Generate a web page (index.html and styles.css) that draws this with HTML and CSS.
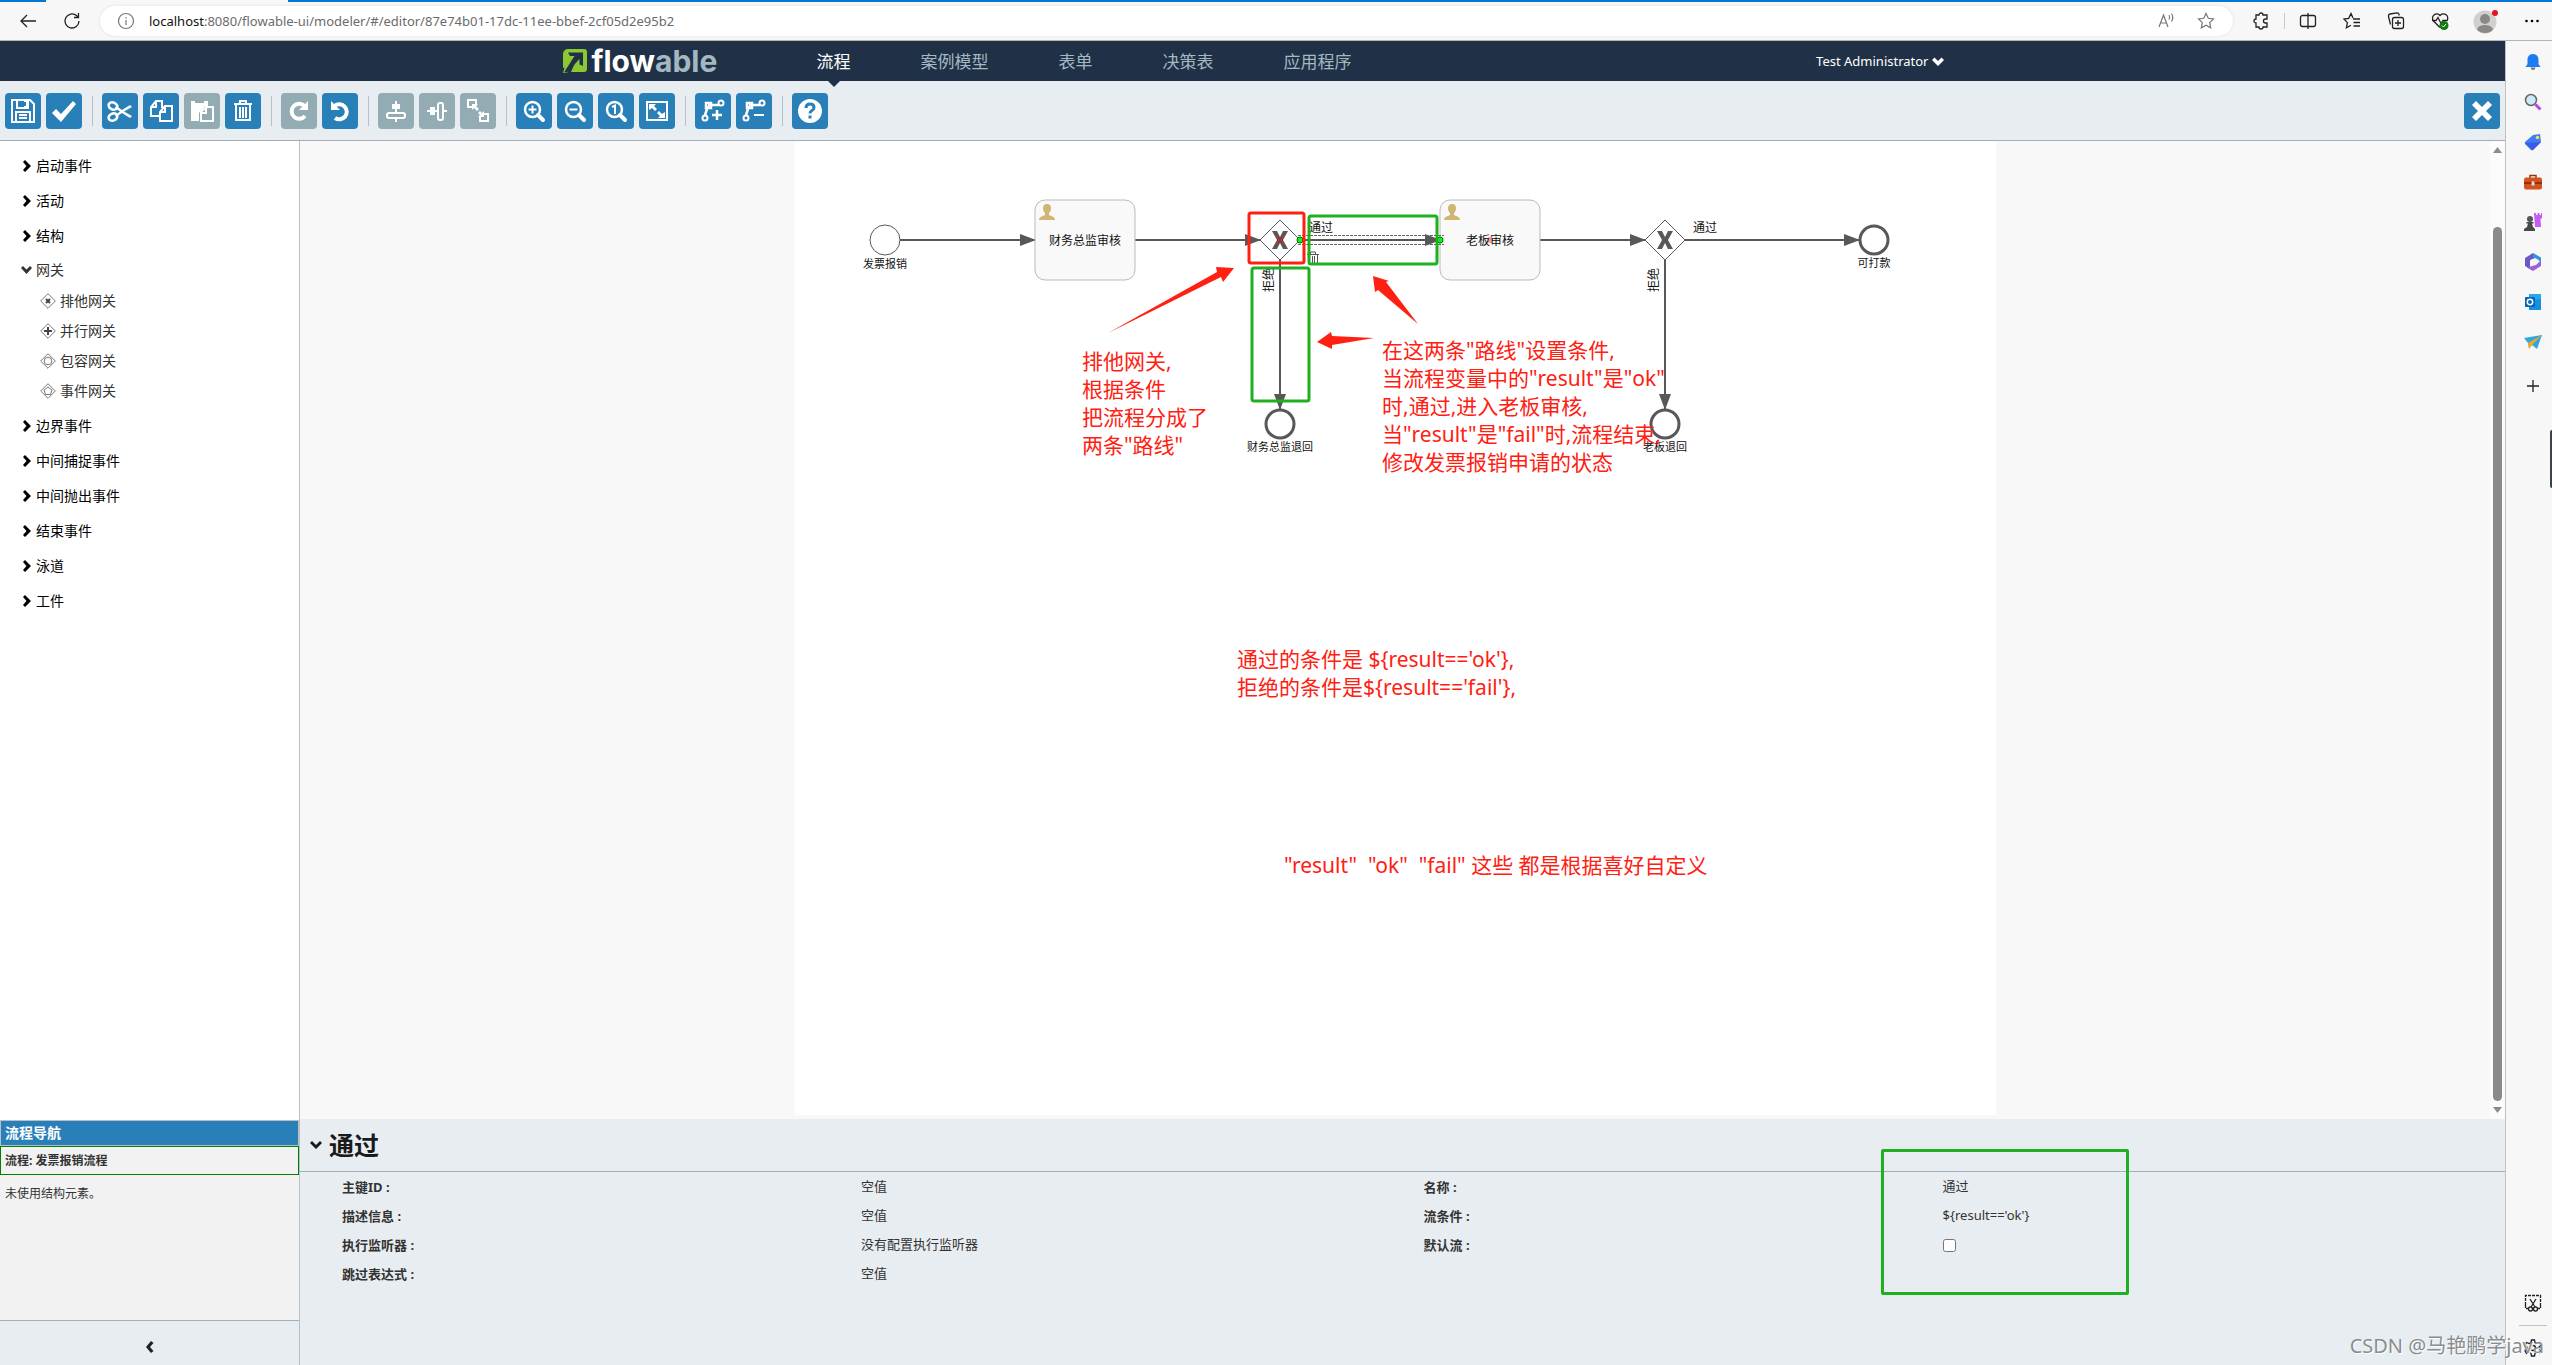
FILE: index.html
```html
<!DOCTYPE html>
<html lang="zh-CN">
<head>
<meta charset="utf-8">
<title>Flowable Modeler</title>
<meta name="viewport" content="width=device-width, initial-scale=1">
<link rel="stylesheet" href="styles.css">
</head>
<body>
<div class="browser-bar">
  <button class="icon-btn nav-btn" aria-label="后退"><svg width="18" height="16" viewBox="0 0 18 16"><path d="M17 8H2M8 2L2 8l6 6" class="ln-dark"/></svg></button>
  <button class="icon-btn nav-btn" aria-label="刷新"><svg width="18" height="18" viewBox="0 0 18 18"><path d="M16 9a7 7 0 1 1-2.500-5.400L15.500 5.500M15.500 1v4.500H11" class="ln-dark"/></svg></button>
  <div class="address">
    <svg width="18" height="18" viewBox="0 0 18 18"><circle cx="9" cy="9" r="7.500" class="ln-gray"/><path d="M9 8v5M9 5v1.500" class="ln-gray"/></svg>
    <span class="url"><b>localhost</b>:8080/flowable-ui/modeler/#/editor/87e74b01-17dc-11ee-bbef-2cf05d2e95b2</span>
    <button class="icon-btn addr-btn" aria-label="朗读"><svg width="18" height="18" viewBox="0 0 18 18"><path d="M2 15L6.500 3 11 15M3.500 11h6M12 3q1.500 2 0 4.500M14.500 1.500q2.500 4 0 8" class="ln-gray"/></svg></button>
    <button class="icon-btn addr-btn" aria-label="收藏"><svg width="18" height="18" viewBox="0 0 18 18"><path d="M9 1.500l2.300 4.800 5.200.7-3.800 3.600 1 5.200L9 13.300l-4.700 2.500 1-5.200L1.500 7l5.200-.7z" class="ln-gray"/></svg></button>
  </div>
  <div class="browser-tools">
    <button class="icon-btn" aria-label="扩展"><svg width="18" height="18" viewBox="0 0 18 18"><path d="M4 3h3a2 2 0 0 1 4 0h4v4h-1.500a2 2 0 0 0 0 4H15v4h-4a2 2 0 0 1-4 0H4v-4a2 2 0 0 1 0-4z" class="ln-dark"/></svg></button>
    <i class="tool-sep"></i>
    <button class="icon-btn" aria-label="分屏"><svg width="18" height="18" viewBox="0 0 18 18"><path d="M9 3.500H3.500a2 2 0 0 0-2 2v7a2 2 0 0 0 2 2H9M9 3.500h5.500a2 2 0 0 1 2 2v7a2 2 0 0 1-2 2H9M9 1v16" class="ln-dark"/></svg></button>
    <button class="icon-btn" aria-label="收藏夹"><svg width="18" height="18" viewBox="0 0 18 18"><path d="M10 6L8 1.500 5.700 6.300.8 7l3.600 3.600-1 5.200L8 13.300M10 7h7M10.500 10.500H17M10.500 14H17" class="ln-dark"/></svg></button>
    <button class="icon-btn" aria-label="集锦"><svg width="18" height="18" viewBox="0 0 18 18"><rect x="5.500" y="5.500" width="11" height="11" rx="2" class="ln-dark"/><path d="M11 8v6M8 11h6M3.500 12.500L1.500 4.500a2 2 0 0 1 1.500-2.500l7-1.200a2 2 0 0 1 2 1.500l.3 1.200" class="ln-dark"/></svg></button>
    <button class="icon-btn" aria-label="浏览器概要"><svg width="18" height="18" viewBox="0 0 18 18"><path d="M9 15.500L2.500 9a4.200 4.200 0 0 1 6.500-5.500A4.200 4.200 0 0 1 15.800 9M1 8.500h4L7 5.500l3 6 2-3h4.500" class="ln-dark"/><circle cx="13" cy="13.500" r="4.500" fill="#107c10"/><path d="M11 13.500l1.500 1.500 2.500-3" stroke="#fff" fill="none"/></svg></button>
    <button class="icon-btn avatar-btn" aria-label="个人资料"><svg width="28" height="26" viewBox="0 0 28 26"><clipPath id="av"><circle cx="13" cy="14" r="11"/></clipPath><circle cx="13" cy="14" r="11.500" fill="#d2d0ce"/><g clip-path="url(#av)" fill="#8a8886"><circle cx="13" cy="11" r="5"/><ellipse cx="13" cy="22" rx="8" ry="5"/></g><circle cx="23" cy="5" r="3" fill="#e81123"/></svg></button>
    <button class="icon-btn" aria-label="更多"><svg width="18" height="18" viewBox="0 0 18 18"><circle cx="3.500" cy="9" r="1.300"/><circle cx="9" cy="9" r="1.300"/><circle cx="14.500" cy="9" r="1.300"/></svg></button>
  </div>
</div>

<div class="window">
<div class="app">
  <header class="top">
    <div class="top-inner">
      <a class="logo" href="#"><svg width="26" height="26" viewBox="0 0 26 26"><path d="M6 1h16a3 3 0 0 1 3 3v17a3 3 0 0 1-3 3H9l3.500-8L1 20V6a5 5 0 0 1 5-5z" fill="#8bc832"/><path d="M1 25L3 18l7-3-5 10z" fill="#8bc832"/><path d="M6 4.500h15V18l-3.500-1.500V11L5 24.500H2L12.500 8H8z" fill="#203147"/></svg><span>flow<em>able</em></span></a>
      <nav class="main-nav"><a href="#" class="on">流程</a><a href="#">案例模型</a><a href="#">表单</a><a href="#">决策表</a><a href="#">应用程序</a></nav>
      <button class="user">Test Administrator <svg width="12" height="9" viewBox="0 0 12 9"><path d="M0 3l2.500-2.500L6 4 9.500.5 12 3 6 9z" fill="#fff"/></svg></button>
    </div>
  </header>

  <div class="toolbar">
    <button class="tb" aria-label="保存"><svg viewBox="0 0 26 26"><path d="M2 2h18l4 4v18H2zM7 2v8h11V2M14 3h3v6h-3M6 24V14h14v10M9 17h8M9 20h8" class="w2"/></svg></button>
    <button class="tb" aria-label="验证"><svg viewBox="0 0 26 26"><path d="M1 15l4-4 5 5L22 3l3 3-15 18z" class="wf"/></svg></button>
    <i class="sep"></i>
    <button class="tb" aria-label="剪切"><svg viewBox="0 0 26 26"><g class="w3"><ellipse cx="6" cy="8" rx="4.500" ry="3.500" transform="rotate(25 6 8)"/><ellipse cx="6" cy="19" rx="4.500" ry="3.500" transform="rotate(-25 6 19)"/></g><path d="M9 8l6 4 8-5 2 2-8 4.500L25 18l-2 2-8-5-6 4-1-2 5-3.500L8 10z" class="wf"/></svg></button>
    <button class="tb" aria-label="复制"><svg viewBox="0 0 26 26"><path d="M12 18H3V9l5-6h6v7M8 3v6H3M17 8h7v15H12V14zM17 8v6h-5" class="w2"/></svg></button>
    <button class="tb off" disabled aria-label="粘贴"><svg viewBox="0 0 26 26"><path d="M2 3h17v5h-3l-6 7v8H2z" class="wf"/><path d="M6 4h9" stroke="#93acb3" stroke-width="2"/><path d="M17 9h7v14H12v-9zM17 9v6h-5" class="w2"/></svg></button>
    <button class="tb" aria-label="删除"><svg viewBox="0 0 26 26"><path d="M4 6h18M10 6V3h6v3M6 7v15h14V7M10 9v11M13 9v11M16 9v11" class="w2"/></svg></button>
    <i class="sep"></i>
    <button class="tb off" disabled aria-label="重做"><svg viewBox="0 0 26 26"><path d="M19 18a7.500 7.500 0 1 1-.5-10" class="w4"/><path d="M22 3v9h-9z" class="wf"/></svg></button>
    <button class="tb" aria-label="撤销"><svg viewBox="0 0 26 26"><path d="M8 20a7.500 7.500 0 1 0-.5-12" class="w4"/><path d="M4 3v9h9z" class="wf"/></svg></button>
    <i class="sep"></i>
    <button class="tb off" disabled aria-label="垂直对齐"><svg viewBox="0 0 26 26"><path d="M9 6h8v5H9zM12 3h2v21h-2z" class="wf"/><rect x="4" y="15" width="18" height="5" rx="2" class="w2 hole"/></svg></button>
    <button class="tb off" disabled aria-label="水平对齐"><svg viewBox="0 0 26 26"><path d="M6 9h5v8H6zM3 12h20v2H3z" class="wf"/><rect x="14" y="5" width="5" height="17" rx="2" class="w2 hole"/></svg></button>
    <button class="tb off" disabled aria-label="相同大小"><svg viewBox="0 0 26 26"><path d="M8 9H3V2h8v6M18 16h5v7h-8v-5" class="w2"/><path d="M7 6h6l-2 2 3 3-2 2-3-3-2 2zM19 19h-6l2-2-2-2 2-2 2 2 2-2z" class="wf"/></svg></button>
    <i class="sep"></i>
    <button class="tb" aria-label="放大"><svg viewBox="0 0 26 26"><circle cx="11.500" cy="11.500" r="7.500" class="w3"/><path d="M17 17l5 5" class="w4 rnd"/><path d="M11.500 7.500v8M7.500 11.500h8" class="w2"/></svg></button>
    <button class="tb" aria-label="缩小"><svg viewBox="0 0 26 26"><circle cx="11.500" cy="11.500" r="7.500" class="w3"/><path d="M17 17l5 5" class="w4 rnd"/><path d="M7.500 11.500h8" class="w2"/></svg></button>
    <button class="tb" aria-label="实际大小"><svg viewBox="0 0 26 26"><circle cx="11.500" cy="11.500" r="7.500" class="w3"/><path d="M17 17l5 5" class="w4 rnd"/><path d="M9 9l3-1.500V16" class="w2"/></svg></button>
    <button class="tb" aria-label="适合屏幕"><svg viewBox="0 0 26 26"><rect x="3" y="4" width="20" height="18" class="w2"/><path d="M5 6h7l-2 2 3 3-2 2-3-3-3 2zM21 20h-7l2-2-3-3 2-2 3 3 3-2z" class="wf"/></svg></button>
    <i class="sep"></i>
    <button class="tb" aria-label="添加弯曲点"><svg viewBox="0 0 26 26"><circle cx="21" cy="5" r="2.500" class="w2"/><circle cx="5" cy="20" r="2.500" class="w2"/><path d="M6 5h5v5H6zM8 7h11M8 8L5 17" class="w3"/><path d="M17 12v10M12 17h10" class="w3"/></svg></button>
    <button class="tb" aria-label="删除弯曲点"><svg viewBox="0 0 26 26"><circle cx="21" cy="5" r="2.500" class="w2"/><circle cx="5" cy="20" r="2.500" class="w2"/><path d="M6 5h5v5H6zM8 7h11M8 8L5 17" class="w3"/><path d="M13 17h10" class="w2"/></svg></button>
    <i class="sep"></i>
    <button class="tb" aria-label="帮助"><svg viewBox="0 0 26 26"><circle cx="13" cy="13" r="12" class="wf"/><path d="M9 10q0-4 4-4t4 3.500q0 2-2 3t-2 3" fill="none" stroke="#2980b9" stroke-width="3"/><path d="M11.500 17.500h3v3h-3z" fill="#2980b9"/></svg></button>
    <button class="tb close" aria-label="关闭"><svg viewBox="0 0 26 26"><path d="M3 7l4-4 6 6 6-6 4 4-6 6 6 6-4 4-6-6-6 6-4-4 6-6z" class="wf"/></svg></button>
  </div>

  <div class="workspace">
    <aside class="left">
      <ul class="palette">
        <li><a href="#"><svg class="chev"><use href="#c-right"/></svg>启动事件</a></li>
        <li><a href="#"><svg class="chev"><use href="#c-right"/></svg>活动</a></li>
        <li><a href="#"><svg class="chev"><use href="#c-right"/></svg>结构</a></li>
        <li class="open"><a href="#"><svg class="chev"><use href="#c-down"/></svg>网关</a>
          <ul>
            <li><svg class="gw" viewBox="0 0 16 16"><path d="M8 .7L15.300 8 8 15.300.7 8z"/><path d="M6 6l4 4M10 6l-4 4" class="bold"/></svg>排他网关</li>
            <li><svg class="gw" viewBox="0 0 16 16"><path d="M8 .7L15.300 8 8 15.300.7 8z"/><path d="M8 4v8M4 8h8" class="bold"/></svg>并行网关</li>
            <li><svg class="gw" viewBox="0 0 16 16"><path d="M8 .7L15.300 8 8 15.300.7 8z"/><circle cx="8" cy="8" r="3.800"/></svg>包容网关</li>
            <li><svg class="gw" viewBox="0 0 16 16"><path d="M8 .7L15.300 8 8 15.300.7 8z"/><path d="M8 4l4 3-1.500 4.500h-5L4 7z"/></svg>事件网关</li>
          </ul>
        </li>
        <li><a href="#"><svg class="chev"><use href="#c-right"/></svg>边界事件</a></li>
        <li><a href="#"><svg class="chev"><use href="#c-right"/></svg>中间捕捉事件</a></li>
        <li><a href="#"><svg class="chev"><use href="#c-right"/></svg>中间抛出事件</a></li>
        <li><a href="#"><svg class="chev"><use href="#c-right"/></svg>结束事件</a></li>
        <li><a href="#"><svg class="chev"><use href="#c-right"/></svg>泳道</a></li>
        <li><a href="#"><svg class="chev"><use href="#c-right"/></svg>工件</a></li>
      </ul>
      <section class="navigator">
        <h2>流程导航</h2>
        <p class="current">流程: 发票报销流程</p>
        <p class="empty">未使用结构元素。</p>
      </section>
      <button class="collapse" aria-label="收起"><svg width="9" height="14" viewBox="0 0 9 14"><path d="M6 1l2.500 2L5 7l3.500 4L6 13 1 7z" fill="#222"/></svg></button>
    </aside>

    <main class="editor">
      <div class="canvas">
        <div class="canvas-body">
        <svg class="paper" viewBox="795 141 1201 974" width="1201" height="974">
          <defs>
            <marker id="head" markerUnits="userSpaceOnUse" markerWidth="16" markerHeight="12" refX="16" refY="6" orient="auto"><path d="M0 0l16 6-16 6z" fill="#585858"/></marker>
            <path id="person" d="M8 0c3 0 4 2 4 4.500 0 2-1 3.500-2 4.500v2c1 1 6 1 6 5H0c0-4 5-4 6-5V9c-1-1-2-2.500-2-4.500C4 2 5 0 8 0z" fill="#d1b575"/>
            <g id="gate"><path d="M0-20L20 0 0 20-20 0z" fill="#fff" stroke="#585858"/><path d="M-8-9h5l3 6 3-6h5L3 0l5 9H3L0 3l-3 6h-5l5-9z" fill="#585858"/></g>
          </defs>
          <g class="flow">
            <path d="M900 240H1036" marker-end="url(#head)"/><path d="M1135 240H1261" marker-end="url(#head)"/><path d="M1301 240H1441" marker-end="url(#head)"/><path d="M1540 240H1646" marker-end="url(#head)"/><path d="M1685 240H1860" marker-end="url(#head)"/>
            <path d="M1280 260V410" marker-end="url(#head)"/><path d="M1665 260V410" marker-end="url(#head)"/>
          </g>
          <circle cx="885" cy="240" r="15" fill="#fff" stroke="#585858"/>
          <g fill="#f9f9f9" stroke="#bbb"><rect x="1035" y="200" width="100" height="80" rx="10"/><rect x="1440" y="200" width="100" height="80" rx="10"/></g>
          <use href="#person" x="1039" y="204"/><use href="#person" x="1444" y="204"/>
          <use href="#gate" x="1280" y="240"/><use href="#gate" x="1665" y="240"/>
          <g fill="#fff" stroke="#585858" stroke-width="3"><circle cx="1874" cy="240" r="14"/><circle cx="1280" cy="424" r="14"/><circle cx="1665" cy="424" r="14"/></g>
          <path d="M1298 235.500h146M1298 244.500h146" stroke="#666" stroke-dasharray="3 1"/>
          <circle cx="1280" cy="240" r="3" fill="#b02a2a"/><circle cx="1490" cy="240" r="3" fill="#f99"/>
          <g fill="#0f0" stroke="#060"><circle cx="1300" cy="240" r="3"/><circle cx="1440" cy="240" r="3"/></g>
          <path d="M1307 254.500h12M1310.500 254v-2h5v2M1309.500 255v8M1312.500 256v7M1314.500 256v7M1317.500 255v8" stroke="#555" fill="none"/>
          <g class="node-label">
            <text x="1085" y="245">财务总监审核</text><text x="1490" y="245">老板审核</text>
            <text x="1321" y="232">通过</text><text x="1705" y="232">通过</text>
            <text transform="translate(1273 280) rotate(-90)">拒绝</text><text transform="translate(1658 280) rotate(-90)">拒绝</text>
          </g>
          <g class="event-label"><text x="885" y="268">发票报销</text><text x="1874" y="267">可打款</text><text x="1280" y="451">财务总监退回</text><text x="1665" y="451">老板退回</text></g>
          <g class="marks">
            <rect x="1249" y="213" width="55" height="50" rx="2" class="red"/>
            <rect x="1309" y="216" width="128" height="48" rx="2"/>
            <rect x="1252" y="268" width="57" height="133" rx="2"/>
          </g>
          <g fill="#ff2012">
            <path d="M1108 333l109-61-1-5 18 1-11 14-2-5z"/>
            <path d="M1418 324l-32-42 3-1-16-5 2 16 3-2z"/>
            <path d="M1374 338l-42-2-1-4-14 10 15 7v-4z"/>
          </g>
          <g class="note">
            <text x="1082" y="369">排他网关,</text><text x="1082" y="397">根据条件</text><text x="1082" y="425">把流程分成了</text><text x="1082" y="453">两条"路线"</text>
            <text x="1382" y="358">在这两条"路线"设置条件,</text><text x="1382" y="386">当流程变量中的"result"是"ok"</text><text x="1382" y="414">时,通过,进入老板审核,</text><text x="1382" y="442">当"result"是"fail"时,流程结束,</text><text x="1382" y="470">修改发票报销申请的状态</text>
            <text x="1237" y="667">通过的条件是 ${result=='ok'},</text><text x="1237" y="695">拒绝的条件是${result=='fail'},</text>
            <text x="1284" y="873">"result"&#160; "ok"&#160; "fail" 这些 都是根据喜好自定义</text>
          </g>
        </svg>
        </div>
        <div class="scrollbar"><svg width="9" height="6" viewBox="0 0 9 6"><path d="M0 6l4.500-6L9 6z" fill="#8b8b8b"/></svg><i></i><svg width="9" height="6" viewBox="0 0 9 6"><path d="M0 0l4.500 6L9 0z" fill="#8b8b8b"/></svg></div>
      </div>
      <section class="props">
        <h1><svg width="14" height="10" viewBox="0 0 14 10"><path d="M1 3l2-2 4 4 4-4 2 2-6 6z" fill="#1a1a1a"/></svg>通过</h1>
        <div class="prop-cols">
          <dl>
            <dt>主键ID :</dt><dd>空值</dd>
            <dt>描述信息 :</dt><dd>空值</dd>
            <dt>执行监听器 :</dt><dd>没有配置执行监听器</dd>
            <dt>跳过表达式 :</dt><dd>空值</dd>
          </dl>
          <dl>
            <dt>名称 :</dt><dd>通过</dd>
            <dt>流条件 :</dt><dd>${result=='ok'}</dd>
            <dt><label for="default-flow">默认流 :</label></dt><dd><input type="checkbox" id="default-flow"></dd>
          </dl>
        </div>
        <div class="highlight"></div>
      </section>
    </main>
  </div>
</div>

<aside class="edge-bar">
  <button class="icon-btn" aria-label="通知"><svg viewBox="0 0 18 18"><path d="M9 1c4 0 5.500 3 5.500 6v4l2 3h-15l2-3V7c0-3 1.500-6 5.500-6z" fill="#1c7cf0"/><path d="M6.500 14.500h5q-.5 2.500-2.500 2.500t-2.500-2.500z" fill="#777"/></svg></button>
  <button class="icon-btn" aria-label="搜索"><svg viewBox="0 0 18 18"><circle cx="7" cy="7" r="5.500" fill="#cdeaf8" stroke="#666" stroke-width="1.500"/><path d="M11.500 11.500l5 5" stroke="#b847e8" stroke-width="3"/></svg></button>
  <button class="icon-btn" aria-label="购物"><svg viewBox="0 0 18 18"><path d="M9 2l7-1 1 8-8 8q-1 .5-2 0L1 11q-.5-1 0-2z" fill="#3f7df5"/><path d="M1 10l7 7q1 .5 2-1l7-7z" fill="#3b5be8"/><circle cx="13.500" cy="4.500" r="1.800" fill="#ffd64a"/></svg></button>
  <button class="icon-btn" aria-label="工具"><svg viewBox="0 0 18 18"><path d="M6 5V2.500h6V5" fill="none" stroke="#8a3a12" stroke-width="1.500"/><rect y="4.500" width="18" height="12" rx="2" fill="#d3521d"/><path d="M0 9h18v2H0z" fill="#922f0c"/><path d="M7.500 8.500h3v4h-3z" fill="#ddd"/></svg></button>
  <button class="icon-btn" aria-label="游戏"><svg viewBox="0 0 18 18"><path d="M10 0h2v2h1.500V0h2v2H17V0h1v5l-1.500 1 .5 8h-6z" fill="#c65bf5"/><circle cx="6" cy="6" r="3" fill="#555"/><path d="M2.500 9h7v1.500H8L9 14l2 2v2H0v-2l3-2 1-3.500H2.500z" fill="#484848"/></svg></button>
  <button class="icon-btn" aria-label="Microsoft 365"><svg viewBox="0 0 18 18"><path d="M9 0L1 5v8l5 3V8l6-4z" fill="#6a58c8"/><path d="M9 0l8 4.500V9l-4-3-4-2z" fill="#2f94d8"/><path d="M17 7v6l-8 5-6-3.500 9-2.500z" fill="#9c61d6"/><circle cx="9" cy="9" r="3" fill="#f7f7f7"/></svg></button>
  <button class="icon-btn" aria-label="Outlook"><svg viewBox="0 0 18 18"><rect x="5" y="1" width="12" height="12" fill="#28a8ea"/><path d="M5 8l12-2v11H5z" fill="#1490df"/><rect x="1" y="4" width="10" height="10" rx="1" fill="#0364b8"/><circle cx="6" cy="9" r="2.700" fill="none" stroke="#fff" stroke-width="1.500"/></svg></button>
  <button class="icon-btn" aria-label="Drop"><svg viewBox="0 0 18 18"><path d="M0 5l18-3-5 14-5-4-3 3-1-5z" fill="#2da5ea"/><path d="M4 10L18 2 8 12l-3 4z" fill="#f4a61d"/></svg></button>
  <button class="icon-btn add" aria-label="添加"><svg viewBox="0 0 18 18"><path d="M9 3v12M3 9h12" class="ln-dark"/></svg></button>
  <span class="grow"></span>
  <button class="icon-btn" aria-label="截图"><svg viewBox="0 0 18 18"><path d="M1.500 11V1.500h15V11M1.500 11v3.500h3M16.500 11v3.500h-3" class="ln-dark" stroke-dasharray="3 1"/><path d="M6 5l5 8M12 5l-5 8" class="ln-dark"/><circle cx="6.500" cy="15" r="2" class="ln-dark"/><circle cx="11.500" cy="15" r="2" class="ln-dark"/></svg></button>
  <hr>
  <button class="icon-btn" aria-label="设置"><svg viewBox="0 0 18 18"><path d="M7.500 1h3l.5 2.500 2 1 2.500-1 1.500 2.700-2 1.800v2l2 1.800-1.500 2.700-2.500-1-2 1-.5 2.500h-3L7 14.500l-2-1-2.500 1L1 11.800 3 10V8L1 6.200l1.500-2.700 2.500 1 2-1z" class="ln-dark"/><circle cx="9" cy="9" r="2.500" class="ln-dark"/></svg></button>
  <i class="handle"></i>
</aside>
</div>

<div class="watermark">CSDN @马艳鹏学java</div>

<svg width="0" height="0" class="defs"><symbol id="c-right" viewBox="0 0 12 12"><path d="M3 2l2-2 6 6-6 6-2-2 3.500-4z"/></symbol><symbol id="c-down" viewBox="0 0 12 12"><path d="M1 4l2-2 3.500 3.500L10 2l2 2-5.500 6z"/></symbol></svg>
</body>
</html>
```

FILE: styles.css
```css
* { box-sizing: border-box; }
body {
  margin: 0;
  height: 100vh;
  display: flex;
  flex-direction: column;
  overflow: hidden;
  position: relative;
  background: #f7f7f7;
  color: #333;
  font: 14px/20px "Noto Sans", "Noto Sans CJK SC", sans-serif;
}
button { font: inherit; color: inherit; border: 0; padding: 0; background: none; cursor: pointer; }
a { color: inherit; text-decoration: none; }
ul, dl, dd, p, h1, h2 { margin: 0; padding: 0; list-style: none; }
svg { display: block; flex: none; }
.defs { position: absolute; }
.ln-dark { fill: none; stroke: #222; stroke-width: 1.3; }
.ln-gray { fill: none; stroke: #767676; stroke-width: 1.2; }

/* Browser bar */
.browser-bar {
  height: 41px;
  flex: none;
  display: flex;
  align-items: center;
  padding: 2px 2px 0 14px;
  border-bottom: 1px solid #b5b5b5;
  background:
    linear-gradient(#0078d4, #0078d4) 0 0 / 46px 2px no-repeat,
    linear-gradient(#0078d4, #0078d4) 288px 0 / 100% 2px no-repeat,
    #f7f7f7;
}
.icon-btn { width: 36px; height: 28px; display: flex; align-items: center; justify-content: center; flex: none; }
.nav-btn { width: 28px; margin-right: 16px; }
.address {
  flex: 1;
  height: 30px;
  display: flex;
  align-items: center;
  padding: 0 7px 0 17px;
  border-radius: 15px;
  background: #fff;
  box-shadow: 0 0 3px #ddd;
}
.nav-btn + .nav-btn { margin-right: 14px; }
.url { flex: 1; margin-left: 14px; font-size: 13px; color: #6b6b6b; white-space: nowrap; }
.url b { font-weight: 400; color: #111; }
.addr-btn { width: 40px; }
.browser-tools { display: flex; align-items: center; gap: 8px; padding-left: 10px; }
.tool-sep { width: 1px; height: 16px; margin: 0 -3px; background: #c8c8c8; }
.avatar-btn { width: 40px; }

/* Page frame */
.window { flex: 1; display: flex; min-height: 0; }
.app { flex: 1; min-width: 0; display: flex; flex-direction: column; }
.top { height: 40px; flex: none; background: #203147; }
.top-inner { width: 100%; max-width: 1382px; height: 100%; margin: 0 auto; display: flex; align-items: center; }
.logo { display: flex; align-items: center; gap: 4px; width: 220px; font: 700 30px/32px Inter, sans-serif; color: #fff; }
.logo em { font-style: normal; color: #a3b8c1; }
.main-nav { display: flex; height: 100%; flex: 1; }
.main-nav a { position: relative; padding: 1px 35px 0; font-size: 17px; line-height: 40px; color: #a3b8c1; }
.main-nav a.on { color: #fff; }
.main-nav a.on::after {
  content: "";
  position: absolute;
  top: 40px;
  left: calc(50% - 6px);
  border: 6px solid transparent;
  border-top-color: #203147;
  border-bottom: 0;
}
.user { display: flex; align-items: center; gap: 3px; font-size: 13px; color: #fff; }

.toolbar {
  height: 60px;
  flex: none;
  display: flex;
  align-items: center;
  gap: 5px;
  padding: 0 5px;
  background: #e8edf1;
  border-bottom: 1px solid #a4acb9;
}
.tb { width: 36px; height: 36px; flex: none; display: flex; align-items: center; justify-content: center; border-radius: 4px; background: #2980b9; }
.tb svg { width: 26px; height: 26px; }
.tb.off { background: #93acb3; }
.tb.close { margin-left: auto; }
.sep { width: 1px; height: 30px; margin: 0 4px 0 5px; background: #b8bfc6; }
.wf { fill: #fff; }
.w2, .w3, .w4 { fill: none; stroke: #fff; stroke-width: 2; }
.w3 { stroke-width: 2.5; }
.w4 { stroke-width: 4; }
.rnd { stroke-linecap: round; }
.hole { fill: #93acb3; }

.workspace { flex: 1; min-height: 0; display: flex; }
.left { width: 300px; flex: none; display: flex; flex-direction: column; background: #fff; border-right: 1px solid #b8bfc6; }
.palette { flex: 1; padding-top: 7px; color: #000; }
.palette a { display: flex; align-items: center; gap: 4px; height: 35px; padding-left: 20px; }
.chev { width: 12px; height: 12px; fill: currentColor; }
.palette .open { color: #333; }
.palette ul { padding-bottom: 2px; }
.palette ul li { display: flex; align-items: center; gap: 4px; height: 30px; padding-left: 40px; }
.palette .open > a { height: 33px; }
.gw { width: 16px; height: 16px; fill: none; stroke: #777; }
.gw .bold { stroke: #444; stroke-width: 2; }
.navigator { height: 200px; background: #f2f2f2; font-size: 12px; }
.navigator h2 { height: 26px; padding: 0 4px; border: 1px solid #b8bfc6; background: #2980b9; color: #fff; font-size: 14px; line-height: 24px; }
.navigator .current { height: 29px; padding: 0 4px; border: 1px solid #008000; font-weight: 700; line-height: 27px; }
.navigator .empty { padding: 9px 5px; }
.collapse { height: 45px; display: flex; align-items: center; justify-content: center; padding-top: 8px; background: #e8edf1; border-top: 1px solid #a4acb9; }

.editor { flex: 1; min-width: 0; display: flex; flex-direction: column; }
.canvas { flex: 1; min-height: 0; display: flex; background: #f8f8f8; }
.canvas-body { flex: 1; min-width: 0; overflow: hidden; }
.paper { margin: 0 auto; background: #fff; }
.flow { fill: none; stroke: #585858; stroke-width: 2; }
.node-label, .event-label { font-size: 12px; text-anchor: middle; fill: #111; }
.event-label { font-size: 11px; }
.marks { fill: none; stroke: #1eb01e; stroke-width: 3; }
.marks .red { stroke: #ff2012; }
.note { font-size: 21px; fill: #ff2012; }
.scrollbar { width: 15px; display: flex; flex-direction: column; align-items: center; justify-content: space-between; padding: 6px 0; background: #fcfcfc; }
.scrollbar i { flex: 1; width: 9px; margin: 74px 0 6px; border-radius: 5px; background: #8b8b8b; }

.props { position: relative; height: 246px; flex: none; background: #e8edf1; font-size: 13px; }
.props h1 { display: flex; align-items: center; gap: 6px; height: 53px; padding: 0 9px; border-bottom: 1px solid #a4acb9; color: #1a1a1a; font-size: 25px; line-height: 52px; }
.prop-cols { display: grid; grid-template-columns: 1fr 1fr; padding: 1px 0 0 42px; }
.prop-cols dl { display: grid; grid-template-columns: 48% 52%; grid-auto-rows: 29px; line-height: 29px; align-items: center; }
.prop-cols dt { font-weight: 700; }
.prop-cols dd { padding-bottom: 2px; }
.prop-cols input { display: block; width: 13px; height: 13px; margin: 2px 0 0; }
.highlight { position: absolute; top: 30px; right: 376px; width: 248px; height: 146px; border: 3px solid #1eb01e; border-radius: 2px; }

/* Browser side bar */
.edge-bar { position: relative; width: 47px; flex: none; display: flex; flex-direction: column; align-items: center; gap: 12px; padding: 7px 0 3px 8px; border-left: 1px solid #c0c0c0; background: #f7f7f7; }
.edge-bar svg { width: 18px; height: 18px; }
.edge-bar .add { margin-top: 4px; }
.grow { flex: 1; }
.edge-bar hr { width: 28px; margin: -4px 0; border: 0; border-top: 1px solid #c0c0c0; }
.handle { position: absolute; right: 0; top: 389px; width: 2px; height: 58px; background: #3c4048; border-radius: 2px 0 0 2px; }

.watermark { position: absolute; right: 8px; bottom: 5px; font-size: 20px; line-height: 28px; color: #8a8d90; text-shadow: 1px 1px 0 #fff; pointer-events: none; }
```
